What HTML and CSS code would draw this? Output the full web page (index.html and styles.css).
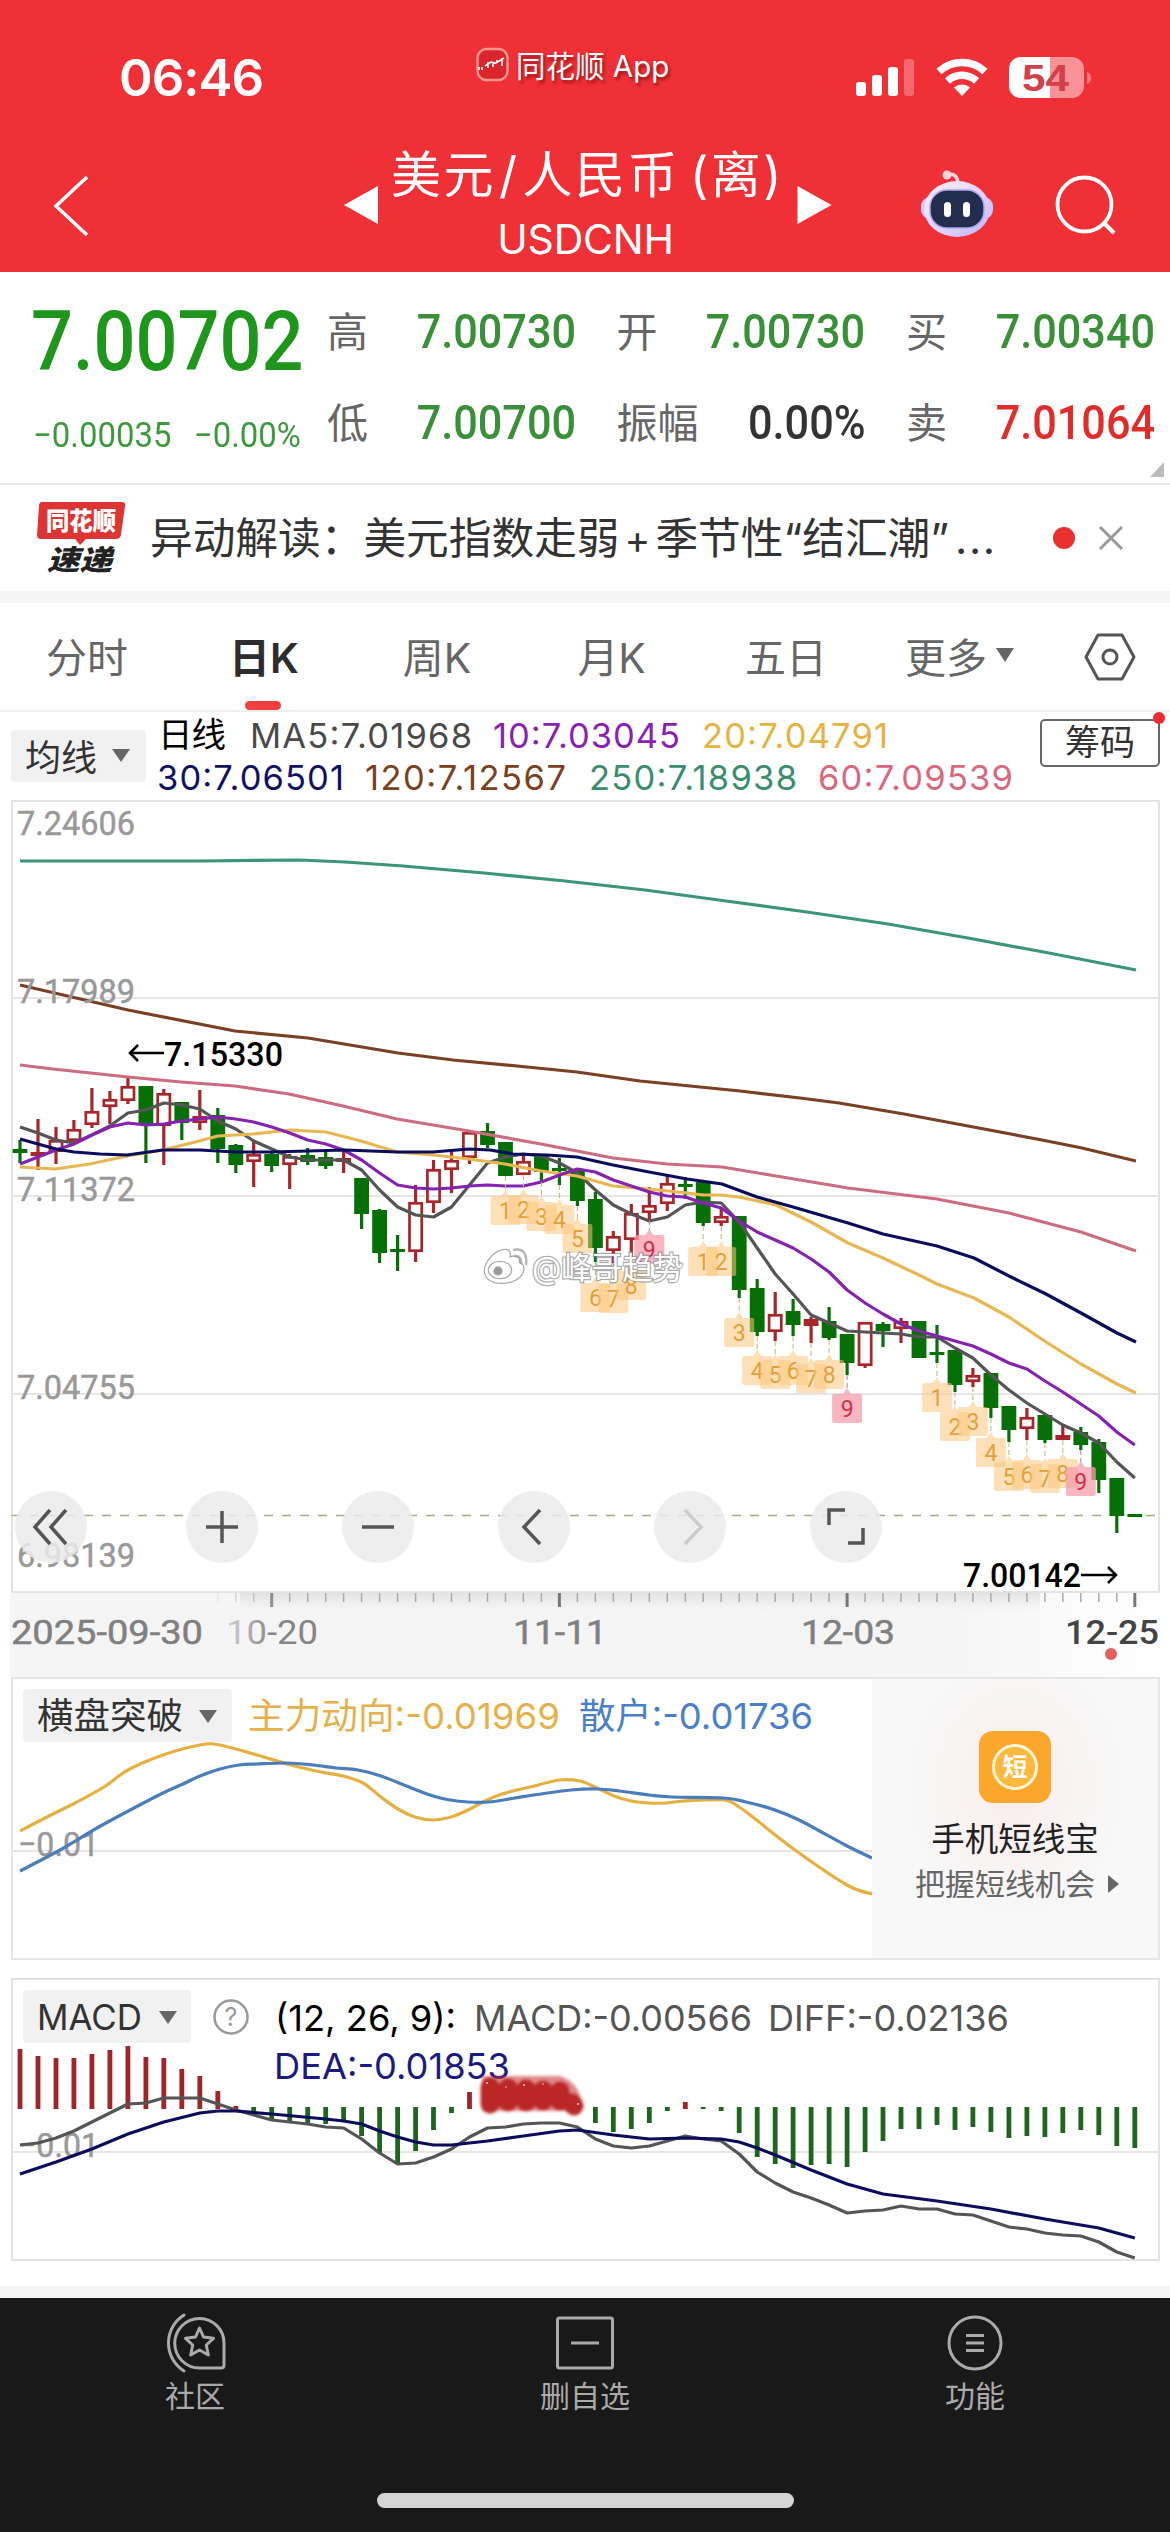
FILE: index.html
```html
<!DOCTYPE html>
<html lang="zh-CN">
<head>
<meta charset="utf-8">
<title>美元/人民币(离) USDCNH</title>
<link rel="stylesheet" href="styles.css">
</head>
<body>
<header class="header">
  <div class="status">
    <span class="time">06:46</span>
    <span class="app-tag">
      <svg width="33" height="35" viewBox="0 0 33 35"><rect x="1.5" y="2" width="30" height="31" rx="9" fill="#d8262c" stroke="#f9948f" stroke-width="2.5"/><path d="M3 23v-3m3 3v-3m6-5v6m5-5v4m4-7v3m5-5v8M9 19l6-4 5 1 8-5" stroke="#fff" stroke-width="1.6" fill="none"/></svg>
      <span>同花顺 App</span>
    </span>
    <svg class="status-icons" width="237" height="42" viewBox="855 57 237 42">
      <g fill="#fff"><rect x="856" y="82" width="10" height="14" rx="3"/><rect x="872" y="75" width="10" height="21" rx="3"/><rect x="888" y="67" width="10" height="29" rx="3"/><rect x="904" y="59" width="10" height="37" rx="3" opacity=".28"/></g>
      <g fill="none" stroke="#fff" stroke-width="7.5"><path d="M939 71.500a34 34 0 0 1 46 0"/><path d="M947.500 81a21.500 21.500 0 0 1 29 0"/></g>
      <path d="M954 87.500a12 12 0 0 1 16 0l-8 8.500z" fill="#fff"/>
      <clipPath id="full"><rect x="1000" y="50" width="50" height="60"/></clipPath>
      <rect x="1009" y="57" width="75" height="41" rx="12" fill="#f99296"/>
      <rect x="1009" y="57" width="75" height="41" rx="12" fill="#fff" clip-path="url(#full)"/>
      <path d="M1087 72q4 1 4 6t-4 6z" fill="#f47c80"/>
      <text x="1022" y="91" textLength="47" lengthAdjust="spacingAndGlyphs" class="battery">54</text>
    </svg>
  </div>
  <nav class="nav">
    <svg class="back" width="38" height="64" viewBox="0 0 38 64"><path d="M35 3L4 32l31 29" fill="none" stroke="#fff" stroke-width="3.500"/></svg>
    <div class="pair">
      <svg width="34" height="38" viewBox="0 0 34 38"><path d="M0 19L34 0v38z" fill="#fff"/></svg>
      <div class="pair-name"><h1>美元<i>/</i>人民币<i class="paren">(离)</i></h1><p>USDCNH</p></div>
      <svg width="35" height="38" viewBox="0 0 34 38"><path d="M34 19L0 0v38z" fill="#fff"/></svg>
    </div>
    <svg class="tools" width="200" height="70" viewBox="920 169 200 70">
      <defs><linearGradient id="shell" x1="0" y1="0" x2="1" y2="1"><stop offset="0" stop-color="#fff0fa"/><stop offset=".6" stop-color="#dfd0ff"/><stop offset="1" stop-color="#b9b4ff"/></linearGradient></defs>
      <path d="M947 175q10-3 11 8" fill="none" stroke="#fbd5dc" stroke-width="3.500"/><circle cx="947" cy="175" r="4.500" fill="#fbd5dc"/>
      <rect x="921" y="197" width="72" height="22" rx="9" fill="#cfc6ff"/>
      <ellipse cx="957" cy="209" rx="33" ry="28" fill="url(#shell)"/>
      <rect x="930" y="190" width="54" height="38" rx="17" fill="#232d4d" stroke="#aaa6f2" stroke-width="1.500"/>
      <rect x="944" y="202" width="7" height="15" rx="3.500" fill="#fff"/><rect x="963" y="202" width="7" height="15" rx="3.500" fill="#fff"/>
      <circle cx="1084.500" cy="204.500" r="27" fill="none" stroke="#fff" stroke-width="3.800"/><path d="M1104 223l10 10" stroke="#fff" stroke-width="4"/>
    </svg>
  </nav>
</header>

<section class="quote">
  <div class="last">
    <div class="price din">7.00702</div>
    <div class="change"><span class="din">−0.00035</span><span class="din right">−0.00%</span></div>
  </div>
  <dl>
    <div><dt>高</dt><dd class="din">7.00730</dd></div>
    <div><dt>开</dt><dd class="din">7.00730</dd></div>
    <div><dt>买</dt><dd class="din">7.00340</dd></div>
    <div><dt>低</dt><dd class="din">7.00700</dd></div>
    <div><dt>振幅</dt><dd class="din flat">0.00%</dd></div>
    <div><dt>卖</dt><dd class="din up">7.01064</dd></div>
  </dl>
  <svg class="corner" width="14" height="15" viewBox="0 0 14 15"><path d="M14 0v15H0z" fill="#bbb"/></svg>
</section>

<section class="news">
  <svg width="90" height="76" viewBox="36 499 90 76">
    <path d="M42 501h80q4 0 3 4l-4 29q-1 4-5 4H86l-6 6-5-6H41q-4 0-4-4l2-29q0-4 3-4z" fill="#dc3533"/>
    <text x="46" y="529" textLength="70" lengthAdjust="spacingAndGlyphs" class="badge-a">同花顺</text>
    <text x="47" y="568.500" textLength="65" lengthAdjust="spacingAndGlyphs" class="badge-b">速递</text>
  </svg>
  <p>异动解读：美元指数走弱<i>+</i>季节性“结汇潮”<b>...</b></p>
  <span class="dot"></span>
  <svg width="26" height="26" viewBox="0 0 26 26"><path d="M2 2l22 22M24 2L2 24" stroke="#999" stroke-width="3"/></svg>
</section>

<div class="tabs">
  <span>分时</span><span class="on">日K</span><span>周K</span><span>月K</span><span>五日</span>
  <span>更多<svg width="20" height="14" viewBox="0 0 20 14"><path d="M1 0h18l-9 14z" fill="#666"/></svg></span>
  <svg width="52" height="48" viewBox="0 0 52 48"><path d="M14 2h24l12 22-12 22H14L2 24z" fill="none" stroke="#555" stroke-width="3" stroke-linejoin="round"/><circle cx="26" cy="24" r="7" fill="none" stroke="#555" stroke-width="3"/></svg>
</div>

<section class="ma">
  <button>均线<svg width="18" height="13" viewBox="0 0 18 13"><path d="M0 0h18l-9 13z" fill="#666"/></svg></button>
  <svg class="legend" width="860" height="88" viewBox="156 712 860 88">
    <text x="158" y="747" textLength="68" fill="#000">日线</text>
    <text x="250" y="748" textLength="222" fill="#4a4a4a">MA5:7.01968</text>
    <text x="493" y="748" textLength="187" fill="#8a1fb4">10:7.03045</text>
    <text x="702" y="748" textLength="186" fill="#e6b343">20:7.04791</text>
    <text x="157" y="790" textLength="187" fill="#100f66">30:7.06501</text>
    <text x="365" y="790" textLength="201" fill="#7b401c">120:7.12567</text>
    <text x="589" y="790" textLength="208" fill="#3a8d6e">250:7.18938</text>
    <text x="818" y="790" textLength="195" fill="#d9687f">60:7.09539</text>
  </svg>
  <span class="chips">筹码</span>
</section>

<svg id="kline" class="panel" width="1170" height="877" viewBox="0 800 1170 877"></svg>
<section class="flow">
  <svg id="flow" class="panel" width="872" height="301" viewBox="0 1677 872 301"></svg>
  <aside class="promo">
    <svg width="72" height="72" viewBox="0 0 72 72"><rect width="72" height="72" rx="14" fill="#fba72c"/><circle cx="36" cy="36" r="21.500" fill="#fcb93c" stroke="#fff6d8" stroke-width="3"/><text x="36" y="45" text-anchor="middle" class="promo-mark">短</text></svg>
    <strong>手机短线宝</strong>
    <p>把握短线机会<svg width="11" height="18" viewBox="0 0 11 18"><path d="M0 0l11 9-11 9z" fill="#666"/></svg></p>
  </aside>
</section>
<svg id="macd" class="panel" width="1170" height="308" viewBox="0 1978 1170 308"></svg>

<footer class="bar">
  <a><svg width="64" height="62" viewBox="163 2312 64 62"><g fill="none" stroke="#aaa" stroke-width="3" stroke-linejoin="round"><path d="M184 2315a33 33 0 0 0 0 56" stroke-linecap="round"/><path d="M199.500 2318.500a24.500 24.500 0 0 1 24.500 24.500v22q0 3-3 3h-21.500a24.500 24.500 0 0 1 0-49.500z"/><path d="M199.500 2328l4 9 10 1.300-7.200 6.700 2 10-8.800-5-8.800 5 2-10-7.200-6.700 10-1.300z"/></g></svg>社区</a>
  <a><svg width="64" height="62" viewBox="553 2312 64 62"><rect x="557.500" y="2318" width="55" height="50" rx="2" fill="none" stroke="#aaa" stroke-width="3"/><path d="M571 2343h28" stroke="#aaa" stroke-width="3"/></svg>删自选</a>
  <a><svg width="64" height="62" viewBox="943 2312 64 62"><circle cx="975" cy="2343" r="26" fill="none" stroke="#aaa" stroke-width="3"/><path d="M966 2335.500h18M966 2343h18M966 2350.500h18" stroke="#aaa" stroke-width="3"/></svg>功能</a>
  <div class="home"></div>
</footer>
<script src="chart.js"></script>
</body>
</html>
```
FILE: styles.css
```css
* { box-sizing: border-box; }
body { margin: 0; width: 1170px; height: 2532px; overflow: hidden; background: #fff; color: #333;
  font-family: Inter, "Noto Sans CJK SC", sans-serif; }
h1, p, dl, dd { margin: 0; }
svg { display: block; flex: none; }
.din { font-family: Roboto, sans-serif; font-weight: 500; white-space: nowrap; }

.header { height: 272px; background: #ef3036; color: #fff; }
.status { height: 130px; display: flex; padding: 0 78px 0 119px; }
.time { width: 357px; padding-top: 47px; font-size: 51px; line-height: 62px; font-weight: 600; letter-spacing: -1px; }
.app-tag { display: flex; gap: 7px; padding-top: 47px; font-size: 29.500px; line-height: 38px; text-shadow: 2px 3px 3px rgba(90, 0, 0, .55); white-space: nowrap; }
.status-icons { margin: 57px 0 0 auto; }
.battery { font: 700 37px "Liberation Sans", sans-serif; fill: #d2404a; }
.nav { height: 142px; display: grid; grid-template-columns: 344px 488px 1fr; }
.back { margin: 44px 0 0 52px; }
.pair { display: flex; justify-content: space-between; align-items: flex-start; }
.pair > svg { margin-top: 56px; }
.pair-name { text-align: center; white-space: nowrap; }
.pair h1 { margin-top: 11px; font-size: 50px; line-height: 68px; font-weight: 400; letter-spacing: 2.500px; }
.pair i { font-style: normal; padding: 0 3px; }
.pair .paren { padding: 0 0 0 10px; }
.pair p { font-size: 41px; line-height: 50px; margin: 5px 4px 0 0; letter-spacing: -.2px; }
.tools { margin: 39px 0 0 88px; }

.quote { position: relative; height: 213px; display: flex; padding: 14px 15px 0 33px; border-bottom: 2px solid #ececec; }
.last { width: 294px; color: #3c9a3c; }
.price { width: 310px; font-size: 84px; line-height: 100px; margin: 6px 0 0 -2px; color: #1d961b; font-weight: 500; transform: scaleX(.88); transform-origin: 0 50%; }
.change { display: flex; justify-content: space-between; width: 268px; font-size: 35px; line-height: 40px; margin-top: 24px; }
.change .din { font-weight: 400; transform: scaleX(.94); transform-origin: 0 50%; }
.change .right { transform-origin: 100% 50%; }
dl { flex: 1; display: grid; grid-template-columns: repeat(3, 249px); justify-content: space-between; grid-auto-rows: 91px; }
dl > div { display: flex; justify-content: space-between; align-items: center; }
dt { font-size: 41px; color: #666; padding-bottom: 5px; }
dd { font-size: 48px; color: #3a9038; transform: scaleX(.9); transform-origin: 100% 50%; }
dd.flat { color: #333; }
dd.up { color: #e02c2a; }
.corner { position: absolute; right: 6px; bottom: 6px; }

.news { height: 118px; display: flex; align-items: center; padding: 0 46px 0 36px; border-bottom: 12px solid #f5f5f5; }
.news p { width: 927px; padding: 0 0 6px 24px; font-size: 42.700px; white-space: nowrap; }
.news i { font-style: normal; font-size: 39px; padding: 0 5px; }
.news b { font-weight: 400; letter-spacing: 1.500px; padding-left: 6px; }
.news .dot { width: 22px; height: 22px; border-radius: 50%; background: #e8302f; }
.news svg:last-child { margin-left: 23px; }
.badge-a { font: 900 25px "Noto Sans CJK SC", sans-serif; fill: #fff; }
.badge-b { font: italic 900 28px "Noto Sans CJK SC", sans-serif; fill: #222; }

.tabs { height: 109px; display: flex; align-items: center; padding: 0 34px 0 46px; border-bottom: 2px solid #eee; font-size: 41px; color: #666; }
.tabs span { display: flex; align-items: center; height: 107px; padding-bottom: 3px; margin-right: 101px; }
.tabs .on { position: relative; color: #2d2d2d; font-weight: 600; }
.tabs .on::after { content: ""; position: absolute; left: 50%; bottom: 0; width: 36px; height: 9px; margin-left: -19px; border-radius: 5px; background: #ee413e; }
.tabs span:nth-child(2) { margin-right: 104px; }
.tabs span:nth-child(3) { margin-right: 106px; }
.tabs span:nth-child(4) { margin-right: 99px; }
.tabs span:nth-child(5) { margin-right: 78px; }
.tabs span:nth-child(6) { margin-right: auto; }
.tabs span svg { margin-left: 8px; }

.ma { height: 88px; display: flex; padding: 0 10px 0 11px; }
.ma button { width: 135px; height: 52px; margin-top: 18px; padding: 0 0 2px 14px; border: 0; border-radius: 4px; background: #f1f1f1; color: #333; display: flex; align-items: center; gap: 15px; font: 36px Inter, "Noto Sans CJK SC", sans-serif; white-space: nowrap; }
.legend { margin-left: 10px; font-size: 34.500px; }
.chips { position: relative; margin: 7px 0 0 auto; width: 120px; height: 48px; border: 2px solid #666; border-radius: 5px; text-align: center; font-size: 35px; line-height: 42px; }
.chips::after { content: ""; position: absolute; top: -9px; right: -7px; width: 12px; height: 12px; border-radius: 50%; background: #ee2b33; }

.panel .din { font-size: 34px; }
.panel .axis { font-weight: 400; stroke-width: .5px; }
.panel .sans { font-size: 36px; }
.flow { display: flex; height: 301px; }
.promo { width: 288px; height: 283px; padding-top: 52px; display: flex; flex-direction: column; align-items: center; border: solid #e5e5e5; border-width: 2px 2px 2px 0;
  background: radial-gradient(ellipse at 50% 38%, rgba(255, 215, 215, .35), transparent 55%), #f8f8f8; }
.promo-mark { font: 700 25px "Noto Sans CJK SC", sans-serif; fill: #fff; }
.promo strong { margin: 11px 0 0; font-size: 33.500px; line-height: 50px; font-weight: 400; color: #222; }
.promo p { display: flex; align-items: center; gap: 13px; font-size: 30px; line-height: 40px; color: #666; padding-left: 4px; }

.bar { height: 246px; background: #191919; border-top: 12px solid #f5f5f5; display: grid; grid-template-columns: repeat(3, 390px); grid-template-rows: 195px 15px; }
.bar a { display: flex; flex-direction: column; align-items: center; padding-top: 14px; font-size: 30px; line-height: 44px; color: #aaa; }
.home { grid-column: 1 / 4; justify-self: center; width: 417px; height: 15px; border-radius: 8px; background: #d4d4d4; }
```
FILE: chart.js
```js
const X0 = 20, STEP = 17.98;
const x = i => +(X0 + i * STEP).toFixed(1);
const RED = '#a8262a', GREEN = '#067006';
const line = (pts, color, w = 3.2) => `<polyline points="${pts.map(p => p.join()).join(' ')}" fill="none" stroke="${color}" stroke-width="${w}" stroke-linejoin="round"/>`;
const series = ys => ys.map((y, i) => [x(i), y]);
const rule = (y, x1 = 12, x2 = 1158) => `<path d="M${x1} ${y}H${x2}" stroke="#e6e6e6" stroke-width="2"/>`;
const frame = (y, h) => `<rect x="12" y="${y + 1}" width="1147" height="${h}" fill="none" stroke="#e3e3e3" stroke-width="2"/>`;
const text = (s, tx, y, w, fill, cls = 'din', extra = '') => `<text x="${tx}" y="${y}" textLength="${w}" lengthAdjust="spacingAndGlyphs" fill="${fill}" class="${cls}" ${extra}>${s}</text>`;
const caret = (cx, y) => `<path d="M${cx - 9} ${y}h18l-9 13z" fill="#666"/>`;
// smooth curve through points (Catmull-Rom converted to Bezier)
const curve = (p, color) => {
  let d = `M${p[0]}`;
  for (let i = 0; i < p.length - 1; i++) {
    const a = p[i - 1] || p[i], b = p[i], c = p[i + 1], e = p[i + 2] || c;
    d += `C${b[0] + (c[0] - a[0]) / 6} ${b[1] + (c[1] - a[1]) / 6} ${c[0] - (e[0] - b[0]) / 6} ${c[1] - (e[1] - b[1]) / 6} ${c}`;
  }
  return `<path d="${d}" fill="none" stroke="${color}" stroke-width="3.2"/>`;
};

// g = falling, r = rising (hollow), s = rising (solid): high, body top, body bottom, low
const candles = `g1140 1149 1153 1163|s1119 1152 1156 1170|r1127 1140 1152 1164|r1120 1129 1141 1145|r1088 1111 1125 1128|r1091 1099 1107 1124|r1078 1086 1101 1104
g1086 1086 1125 1163|r1089 1093 1126 1165|g1102 1102 1123 1140|r1090 1116 1123 1130|g1108 1115 1149 1163|g1144 1145 1165 1173|r1141 1154 1162 1187|g1152 1154 1166 1172
r1154 1156 1165 1189|g1148 1155 1162 1165|g1152 1157 1166 1169|s1150 1158 1162 1173|g1178 1178 1214 1229|g1209 1210 1253 1263|g1235 1249 1252 1271|r1185 1202 1252 1262
r1160 1169 1203 1213|r1152 1160 1170 1193|r1131 1132 1158 1164|g1123 1131 1145 1148|g1142 1142 1176 1176|r1155 1161 1175 1175|g1156 1156 1172 1182|g1158 1168 1171 1185
g1170 1170 1201 1206|g1192 1199 1248 1262|r1231 1236 1251 1263|r1204 1213 1240 1257|r1187 1205 1213 1220|r1176 1183 1204 1211|g1177 1184 1187 1199|g1182 1182 1223 1226
r1208 1216 1223 1226|g1216 1216 1290 1298|g1279 1288 1332 1336|r1292 1314 1332 1341|g1299 1311 1325 1336|s1317 1319 1326 1343|g1307 1321 1338 1340|g1334 1334 1363 1375
r1322 1322 1366 1368|g1322 1324 1331 1347|r1318 1321 1329 1343|g1321 1321 1358 1358|g1325 1352 1355 1363|g1350 1350 1385 1392|r1368 1375 1382 1387|g1373 1373 1408 1418
g1406 1406 1430 1442|r1408 1417 1429 1440|g1414 1415 1440 1443|s1426 1435 1440 1440|g1427 1432 1445 1450|g1439 1442 1480 1493|g1478 1478 1516 1533|g1514 1514 1517 1517`
  .split(/[|\n]/).map(s => [s[0], ...s.slice(1).split(' ').map(Number)]);
const candle = ([t, h, a, b, l], i) => {
  const c = t === 'g' ? GREEN : RED, cx = x(i);
  const wick = `<path d="M${cx} ${h}V${a}M${cx} ${b}V${l}" stroke="${c}" stroke-width="3.2"/>`;
  return wick + (t === 'r'
    ? `<rect x="${cx - 6.1}" y="${a + 1.3}" width="12.200" height="${Math.max(b - a - 2.6, 2)}" fill="none" stroke="${c}" stroke-width="2.700"/>`
    : `<rect x="${cx - 7.4}" y="${a}" width="14.800" height="${b - a}" fill="${c}"/>`);
};

// nine-turn counters: index, digit, centre y
const tags = [[27,1,1210],[28,2,1209],[29,3,1216],[30,4,1219],[31,5,1238],[32,6,1297],[33,7,1298],[34,8,1285],[35,9,1249],[38,1,1261],[39,2,1261],[40,3,1332],[41,4,1370],[42,5,1374],[43,6,1370],[44,7,1378],[45,8,1374],[46,9,1408],[51,1,1397],[52,2,1426],[53,3,1421],[54,4,1452],[55,5,1476],[56,6,1474],[57,7,1478],[58,8,1473],[59,9,1481]];
const tag = ([i, n, cy]) => {
  const c = n === 9 ? '#f59dab' : '#fbc67c', cx = x(i), top = cy - 14;
  return `<path d="M${cx} ${candles[i][4]}V${top - 5}" stroke="${n === 9 ? '#c77' : '#c9b27e'}" stroke-width="1" stroke-dasharray="5 3"/>
  <path d="M${cx - 15} ${top + 2}q0-2 2-2h9l4-6 4 6h9q2 0 2 2v25q0 2-2 2h-26q-2 0-2-2z" fill="${c}" opacity="${n === 9 ? .75 : .55}"/>
  <text x="${cx}" y="${cy + 8.5}" text-anchor="middle" style="font:400 23px Roboto" fill="${n === 9 ? '#d2304a' : '#e3a03a'}">${n}</text>`;
};

const ma5 = [1127,1133,1140,1143,1135,1126,1113,1110,1103,1105,1109,1121,1129,1141,1149,1157,1160,1160,1160,1170,1190,1207,1215,1217,1207,1185,1163,1157,1154,1156,1163,1173,1190,1205,1214,1221,1217,1205,1202,1203,1222,1248,1274,1294,1315,1323,1331,1332,1333,1334,1337,1337,1348,1358,1375,1390,1403,1414,1425,1433,1443,1462,1478];
const ma10 = [1164,1157,1150,1144,1135,1127,1123,1125,1124,1121,1119,1117,1119,1122,1127,1133,1140,1144,1150,1160,1173,1185,1188,1189,1188,1186,1185,1186,1186,1182,1175,1169,1172,1180,1186,1192,1196,1197,1203,1208,1221,1232,1240,1248,1259,1272,1290,1303,1314,1324,1331,1336,1341,1346,1354,1363,1369,1381,1392,1404,1416,1432,1445];
const ma20 = [[20,1167],[55,1169],[90,1164],[127,1156],[163,1150],[199,1141],[218,1136],[253,1134],[290,1130],[326,1132],[361,1141],[397,1152],[433,1155],[469,1159],[505,1164],[541,1171],[577,1176],[613,1186],[649,1189],[687,1193],[703,1195],[721,1195],[739,1197],[776,1205],[811,1222],[848,1243],[883,1258],[919,1275],[937,1284],[974,1298],[1009,1317],[1046,1342],[1081,1364],[1117,1384],[1136,1393]];
const ma30 = [[20,1139],[56,1149],[74,1152],[100,1154],[127,1155],[163,1150],[200,1150],[235,1152],[271,1152],[308,1151],[345,1150],[397,1152],[433,1152],[469,1149],[490,1150],[513,1154],[547,1155],[577,1157],[613,1165],[649,1172],[687,1179],[722,1184],[757,1197],[793,1207],[848,1223],[883,1234],[937,1246],[974,1258],[1009,1276],[1046,1294],[1081,1313],[1117,1333],[1136,1342]];
const ma60 = [[20,1065],[53,1069],[128,1077],[181,1082],[235,1086],[289,1094],[343,1106],[397,1119],[469,1131],[541,1144],[577,1151],[613,1158],[667,1164],[722,1167],[776,1176],[848,1188],[937,1199],[1009,1213],[1081,1232],[1136,1251]];
const ma120 = [[20,985],[128,1010],[235,1031],[308,1038],[398,1053],[453,1060],[527,1067],[577,1072],[640,1081],[740,1091],[800,1098],[839,1103],[904,1114],[968,1126],[1042,1140],[1082,1148],[1136,1161]];
const ma250 = [[20,861],[200,861],[300,860],[345,862],[403,866],[484,873],[565,881],[645,890],[726,901],[807,912],[888,924],[968,938],[1049,953],[1136,970]];

const ring = (cx, inner, color = '#555') => `<circle cx="${cx}" cy="1527" r="36" fill="#ebebeb" opacity=".85"/><path d="${inner}" fill="none" stroke="${color}" stroke-width="3.5"/>`;
let ticks = '';
for (let i = 11; i < 63; i++) {
  const long = i % 16 === 14;
  ticks += `<path d="M${x(i)} 1593v${long ? 14 : 9}" stroke="${long ? '#777' : '#aaa'}" stroke-width="${long ? 3 : 1.5}" opacity="${Math.min(1, (i - 10) / 5)}"/>`;
}
document.getElementById('kline').innerHTML = `
  <defs><linearGradient id="fade"><stop offset="0" stop-color="#f5f5f5"/><stop offset=".82" stop-color="#f5f5f5"/><stop offset="1" stop-color="#fff"/></linearGradient>
  <linearGradient id="fade2"><stop offset="0" stop-color="#999" stop-opacity=".4"/><stop offset=".5" stop-color="#858585"/></linearGradient>
  <linearGradient id="shade" x2="0" y2="1"><stop offset="0" stop-color="#ddd" stop-opacity=".8"/><stop offset="1" stop-color="#eee" stop-opacity="0"/></linearGradient></defs>
  <rect x="10" y="1593" width="1150" height="84" fill="url(#fade)"/><rect x="240" y="1593" width="800" height="20" fill="url(#shade)"/>
  ${frame(800, 791)}${rule(998)}${rule(1196)}${rule(1394)}
  <path d="M12 1515.500H1156" stroke="#a9aa7e" stroke-width="1.500" stroke-dasharray="9 9"/>
  ${candles.map(candle).join('')}
  ${line(series(ma5), '#555')}${line(ma20, '#e8b751')}${line(ma60, '#cd6c80')}${line(ma120, '#7a4024')}${line(ma250, '#3b957b')}${line(series(ma10), '#8423b0')}${line(ma30, '#0c0c5c')}
  ${tags.map(tag).join('')}
  ${[['7.24606', 835], ['7.17989', 1003], ['7.11372', 1201], ['7.04755', 1399], ['6.98139', 1567]].map(([s, y]) => text(s, 17, y, 118, '#999', 'din axis', 'stroke="#999"')).join('')}
  <path d="M164 1053H130M138 1045l-8 8 8 8" fill="none" stroke="#000" stroke-width="2.500"/>${text('7.15330', 164, 1066, 119, '#000')}
  <path d="M1081 1575H1115M1108 1567l8 8-8 8" fill="none" stroke="#000" stroke-width="2.500"/>${text('7.00142', 963, 1587, 118, '#000')}
  <g fill="#fff" stroke="#888" stroke-opacity=".7" stroke-width="2.500" paint-order="stroke">
    <path d="M485 1271c0-10 12-22 21-21 5 1 4 6 3 8 5-2 11-2 10 5 6 2 5 8 2 12-8 11-36 11-36-4z"/>
    <ellipse cx="500" cy="1270" rx="11" ry="8"/><circle cx="498" cy="1271" r="3.500" fill="#999"/>
    <path d="M513 1250q15-3 13 15M514 1256q8-1 7 8" fill="none" stroke="#999"/>
    ${text('@峰哥趋势', 532, 1279, 151, '#fff', 'sans', 'style="font-size:31px"')}
  </g>
  ${ring(51, 'M50 1510l-15 17 15 17M66 1510l-15 17 15 17')}${ring(222, 'M206 1527h32M222 1511v32')}${ring(378, 'M362 1527h32')}
  ${ring(534, 'M540 1510l-16 17 16 17')}${ring(690, 'M685 1510l16 17-16 17', '#ccc')}${ring(846, 'M829 1525v-15h16M848 1543h15v-15')}
  ${ticks}
  ${text('2025-09-30', 11, 1644, 192, '#808080', 'din axis', 'stroke="#808080"')}${text('10-20', 226, 1644, 92, 'url(#fade2)', 'din axis')}${text('11-11', 513, 1644, 94, '#808080', 'din axis', 'stroke="#808080"')}${text('12-03', 801, 1644, 94, '#808080', 'din axis', 'stroke="#808080"')}${text('12-25', 1065, 1644, 94, '#444')}
  <circle cx="1111" cy="1654" r="6" fill="#e4605c"/>`;

const main = [[20,1831],[45,1818],[75,1803],[104,1787],[128,1770],[163,1755],[200,1745],[220,1745],[257,1755],[291,1765],[321,1772],[343,1776],[363,1783],[381,1797],[398,1809],[415,1817],[433,1820],[451,1817],[468,1810],[485,1801],[502,1794],[530,1787],[560,1780],[580,1781],[597,1788],[614,1796],[631,1801],[649,1803],[666,1803],[684,1801],[724,1800],[739,1807],[754,1818],[795,1850],[847,1885],[872,1894]];
const retail = [[20,1871],[60,1850],[97,1828],[134,1808],[163,1793],[183,1784],[200,1776],[220,1769],[239,1765],[257,1764],[287,1763],[313,1765],[336,1768],[358,1770],[381,1776],[414,1789],[433,1796],[450,1800],[468,1802],[489,1802],[515,1798],[541,1794],[571,1790],[597,1789],[619,1791],[649,1795],[672,1797],[724,1798],[746,1802],[772,1809],[799,1820],[847,1846],[872,1858]];
document.getElementById('flow').innerHTML = `
  <path d="M872 1678H12V1959H872" fill="none" stroke="#e5e5e5" stroke-width="2"/>${rule(1851, 12, 872)}
  <rect x="23" y="1689" width="209" height="53" rx="4" fill="#f1f1f1"/>${text('横盘突破', 37, 1729, 146, '#333', 'sans')}${caret(208, 1710)}
  ${text('主力动向:-0.01969', 248, 1729, 312, '#e6b04a', 'sans')}${text('散户:-0.01736', 579, 1729, 234, '#4a80c8', 'sans')}
  ${text('−0.01', 18, 1856, 81, '#999', 'din axis', 'stroke="#999"')}${curve(main, '#e5b03f')}${curve(retail, '#4a7dbb')}`;

const bars = [2049,2056,2058,2058,2054,2050,2046,2057,2058,2069,2076,2091,2106,2113,2120,2123,2123,2124,2121,2136,2153,2164,2151,2130,2113,2092,0,0,0,0,0,0,2123,2132,2129,2123,2111,2102,2109,2111,2133,2157,2164,2168,2165,2164,2167,2152,2141,2129,2129,2125,2130,2127,2132,2138,2136,2137,2133,2130,2135,2146,2148];
const diff = [2145,2143,2138,2131,2122,2113,2104,2103,2098,2098,2098,2104,2110,2115,2120,2122,2124,2127,2128,2139,2153,2164,2163,2157,2149,2137,2128,2127,2124,2123,2123,2127,2139,2146,2148,2146,2141,2136,2139,2141,2154,2172,2183,2192,2198,2205,2213,2211,2210,2206,2209,2209,2214,2215,2221,2227,2229,2233,2235,2236,2242,2252,2258];
const dea = [[0,2174],[2,2162],[4,2149],[6,2134],[8,2122],[10,2113],[11,2111],[12,2111],[14,2114],[17,2119],[18,2121],[19,2124],[20,2131],[21,2137],[22,2142],[23,2145],[24,2145],[26,2141],[28,2136],[30,2131],[31,2130],[33,2135],[35,2139],[37,2138],[39,2139],[40,2142],[41,2148],[42,2155],[44,2170],[46,2184],[47,2189],[48,2194],[51,2201],[54,2209],[57,2219],[60,2228],[62,2238]].map(([i, y]) => [x(i), y]);
document.getElementById('macd').innerHTML = `
  <defs><filter id="soft" x="-20%" y="-40%" width="140%" height="180%"><feGaussianBlur stdDeviation="1.800"/></filter></defs>
  ${frame(1978, 281)}${rule(2152)}
  <rect x="23" y="1990" width="168" height="53" rx="4" fill="#f1f1f1"/>${text('MACD', 37, 2030, 105, '#333', 'sans')}${caret(168, 2011)}
  <circle cx="231" cy="2017" r="16.500" fill="none" stroke="#999" stroke-width="2.500"/><text x="231" y="2026" text-anchor="middle" fill="#999" style="font-size:25px">?</text>
  ${text('(12, 26, 9):', 275, 2031, 181, '#000', 'sans')}${text('MACD:-0.00566', 474, 2031, 278, '#555', 'sans')}${text('DIFF:-0.02136', 768, 2031, 241, '#555', 'sans')}
  ${text('−0.01', 18, 2157, 81, '#999', 'din axis', 'stroke="#999"')}
  ${bars.map((y, i) => y ? (y < 2107 ? `<path d="M${x(i)} ${y}V2109" stroke="#a0252a" stroke-width="4.8"/>` : `<path d="M${x(i)} 2107V${y}" stroke="#1f651f" stroke-width="4.8"/>`) : '').join('')}
  ${line(series(diff), '#555')}${line(dea, '#0c0c5c')}
  ${text('DEA:-0.01853', 274, 2079, 236, '#1a1a80', 'sans')}
  <g filter="url(#soft)"><path d="M482 2076H560q18 6 22 26 0 10-10 9H482z" fill="#c93a3a" opacity=".6"/><path d="M490 2104V2087M508 2102V2088M526 2102V2089M543 2101V2090M560 2101V2091M572 2103l2 3" stroke="#b82220" stroke-width="19" stroke-linecap="round" opacity=".95"/></g>
  <g fill="#fff" opacity=".8"><circle cx="487" cy="2083" r="1"/><circle cx="506" cy="2087" r=".8"/><circle cx="524" cy="2085" r="1"/><circle cx="543" cy="2084" r=".8"/><circle cx="578" cy="2104" r="1"/></g>`;
```
